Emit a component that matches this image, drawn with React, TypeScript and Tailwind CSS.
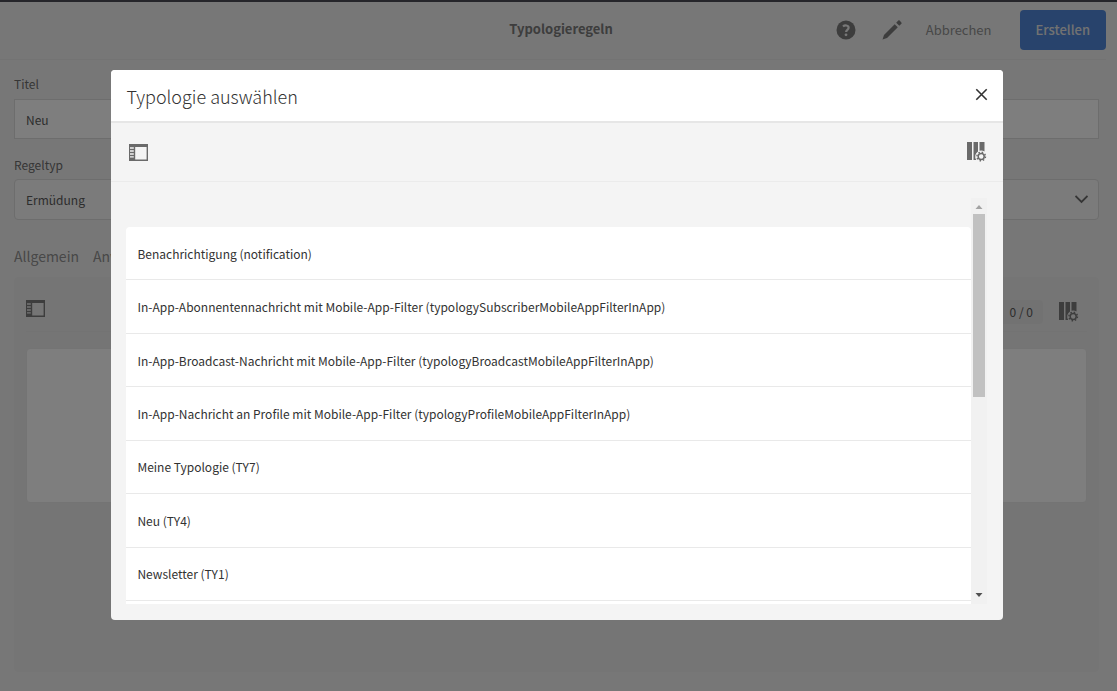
import React, { useState } from 'react';

const typologies = [
  'Benachrichtigung (notification)',
  'In-App-Abonnentennachricht mit Mobile-App-Filter (typologySubscriberMobileAppFilterInApp)',
  'In-App-Broadcast-Nachricht mit Mobile-App-Filter (typologyBroadcastMobileAppFilterInApp)',
  'In-App-Nachricht an Profile mit Mobile-App-Filter (typologyProfileMobileAppFilterInApp)',
  'Meine Typologie (TY7)',
  'Neu (TY4)',
  'Newsletter (TY1)',
];

function RailIcon() {
  return (
    <svg width="19" height="17" viewBox="0 0 19 17" fill="currentColor" aria-hidden="true">
      <path
        fillRule="evenodd"
        d="M0 0h19v17H0zM1 3.200v1.600h3.800V3.200zM1 6.200v1.600h3.800V6.200zM1 9.200v1.600h3.800V9.200zM1 12.200v1.200h3.800v-1.200zM6.200 3v12.600h11.400V3z"
      />
    </svg>
  );
}

function ColumnsIcon() {
  return (
    <svg width="20" height="20" viewBox="0 0 20 20" aria-hidden="true">
      <path
        fill="currentColor"
        d="M0 0h5v18H0zM6.500 0H11v9.400A6 6 0 0 0 9.300 18H6.500zM12.500 0h5v9.500A6 6 0 0 0 12.500 8.750z"
      />
      <circle cx="14.200" cy="14.500" r="3" fill="none" stroke="currentColor" strokeWidth="1.500" />
      <circle cx="14.200" cy="14.500" r="4.300" fill="none" stroke="currentColor" strokeWidth="1.400" strokeDasharray="1.500 1.877" />
    </svg>
  );
}

function Header() {
  return (
    <header className="grid h-[58px] grid-cols-[1fr_auto_1fr] items-center border-b border-[#e6e6e6] pb-[2px]">
      <h1 className="col-start-2 pb-px pl-4 text-[13px] leading-5 font-bold text-[#7a7a7a]">Typologieregeln</h1>
      <div className="flex items-center justify-end">
        <button aria-label="Hilfe" className="mr-[26px] text-[#7a7a7a]">
          <svg width="20" height="20" viewBox="0 0 20 20" aria-hidden="true">
            <circle cx="10" cy="10" r="9.500" fill="currentColor" />
            <path d="M7 6.500c1.800-1.700 5.600-1.300 5.600 1.300 0 2-2.500 2.200-2.500 4.200" fill="none" stroke="#f0f0f0" strokeWidth="2.200" />
            <circle cx="10" cy="14.800" r="1.400" fill="#f0f0f0" />
          </svg>
        </button>
        <button aria-label="Bearbeiten" className="mr-6 text-[#7a7a7a]">
          <svg width="20" height="20" viewBox="0 0 20 20" fill="currentColor" aria-hidden="true">
            <path d="M12.700 4.200l3.100 3.100L5 18 .5 19.600 2 15zM14.200 2.700L16.300.6c.4-.4.900-.4 1.300 0l1.800 1.800c.4.4.4.9 0 1.300l-2.100 2.100z" />
          </svg>
        </button>
        <button className="mr-7 text-[13px] leading-5 text-[#909090]">Abbrechen</button>
        <button className="h-10 rounded bg-[#5087d8] px-4 text-[13px] leading-5 font-medium text-[#e4e4e4]">Erstellen</button>
      </div>
    </header>
  );
}

function RuleForm() {
  const [title, setTitle] = useState('Neu');

  return (
    <form className="flex flex-1 flex-col pt-[14px] pr-[7px] pl-[14px]">
      <label htmlFor="title" className="text-xs leading-5 text-[#6c6c6c]">Titel</label>
      <input
        id="title"
        value={title}
        onChange={(e) => setTitle(e.target.value)}
        className="mt-[5px] h-10 w-full border border-[#dadada] bg-[#fcfcfc] px-[11px] text-xs text-[#5a5a5a]"
      />
      <label htmlFor="type" className="mt-4 text-xs leading-5 text-[#6c6c6c]">Regeltyp</label>
      <div className="relative mt-1">
        <select id="type" className="h-[41px] w-full appearance-none rounded-sm border border-[#dadada] bg-[#f6f6f6] px-[11px] text-xs text-[#5a5a5a]">
          <option>Ermüdung</option>
        </select>
        <svg className="pointer-events-none absolute top-4 right-[11px] text-[#6a6a6a]" width="13" height="9" viewBox="0 0 13 9" fill="none" stroke="currentColor" strokeWidth="1.800" aria-hidden="true">
          <path d="M.5 1l6 6 6-6" />
        </svg>
      </div>
      <nav className="mt-[26px] flex gap-[14px] text-sm leading-5 text-[#909090]">
        <a href="#allgemein">Allgemein</a>
        <a href="#anwendung">Anw</a>
      </nav>
      <section className="mt-[11px] mb-2 flex-1 rounded bg-[#ebebeb] px-3">
        <div className="flex h-[55px] items-start justify-between border-b border-[#e6e6e6] pt-[23px] text-[#7a7a7a]">
          <button type="button" aria-label="Seitenleiste"><RailIcon /></button>
          <div className="flex items-center gap-4 pr-2">
            <span className="rounded bg-[#e4e4e4] px-[10px] text-xs leading-6 text-[#5a5a5a]">0 / 0</span>
            <button type="button" aria-label="Spalten konfigurieren"><ColumnsIcon /></button>
          </div>
        </div>
        <div className="mt-4 h-[155px] rounded border border-[#e8e8e8] bg-[#fcfcfc]" />
      </section>
    </form>
  );
}

function TypologyDialog({ onClose }: { onClose: () => void }) {
  return (
    <div className="fixed inset-0 flex items-center justify-center bg-black/50 pr-[3px] pb-px">
      <div role="dialog" aria-modal="true" aria-labelledby="dialog-title" className="flex h-[550px] w-4/5 max-w-[892px] flex-col overflow-hidden rounded bg-[#f4f4f4]">
        <div className="flex h-[53px] shrink-0 items-center justify-between border-b-2 border-[#e6e6e6] bg-white pr-[14px] pl-[15px]">
          <h2 id="dialog-title" className="pt-px text-lg leading-6 font-light text-[#323232]">Typologie auswählen</h2>
          <button aria-label="Schließen" onClick={onClose} className="px-px pb-[2px] text-[#323232]">
            <svg width="13" height="13" viewBox="0 0 13 13" stroke="currentColor" strokeWidth="1.600" aria-hidden="true">
              <path d="M1.300 1.300l10.400 10.400M11.700 1.300l-10.400 10.400" />
            </svg>
          </button>
        </div>
        <div className="flex h-[59px] shrink-0 items-center justify-between border-b border-[#ebebeb] pr-4 pl-[18px] text-[#6a6a6a]">
          <button aria-label="Seitenleiste"><RailIcon /></button>
          <button aria-label="Spalten konfigurieren"><ColumnsIcon /></button>
        </div>
        <div className="my-4 mr-4 ml-[15px] flex min-h-0 flex-1">
          <div className="flex-1 pt-[29px]">
            <ul className="grid h-[374px] auto-rows-fr rounded-t-sm bg-white">
              {typologies.map((name) => (
                <li key={name} className="border-b border-[#e9e9e9]">
                  <button className="h-full w-full px-[11px] pt-px text-left text-xs text-[#323232]">{name}</button>
                </li>
              ))}
            </ul>
            <div className="h-[3px] bg-white" />
          </div>
          <div className="flex w-4 flex-col items-center bg-[#f1f1f1]">
            <svg width="16" height="16" viewBox="0 0 16 16" aria-hidden="true">
              <path d="M4.500 11h7L8 7z" fill="#a3a3a3" />
            </svg>
            <div className="h-[183px] w-3 bg-[#c1c1c1]" />
            <svg className="mt-auto" width="16" height="16" viewBox="0 0 16 16" aria-hidden="true">
              <path d="M4.500 5h7L8 9z" fill="#505050" />
            </svg>
          </div>
        </div>
      </div>
    </div>
  );
}

export default function App() {
  const [isOpen, setIsOpen] = useState(true);

  return (
    <div className="min-h-screen bg-[#efefef] font-['Noto_Sans_CJK_SC',sans-serif]">
      <div className="flex min-h-screen flex-col border-t-2 border-[#4b4b55] pr-[11px] pb-[11px]">
        <Header />
        <RuleForm />
      </div>
      {isOpen && <TypologyDialog onClose={() => setIsOpen(false)} />}
    </div>
  );
}
